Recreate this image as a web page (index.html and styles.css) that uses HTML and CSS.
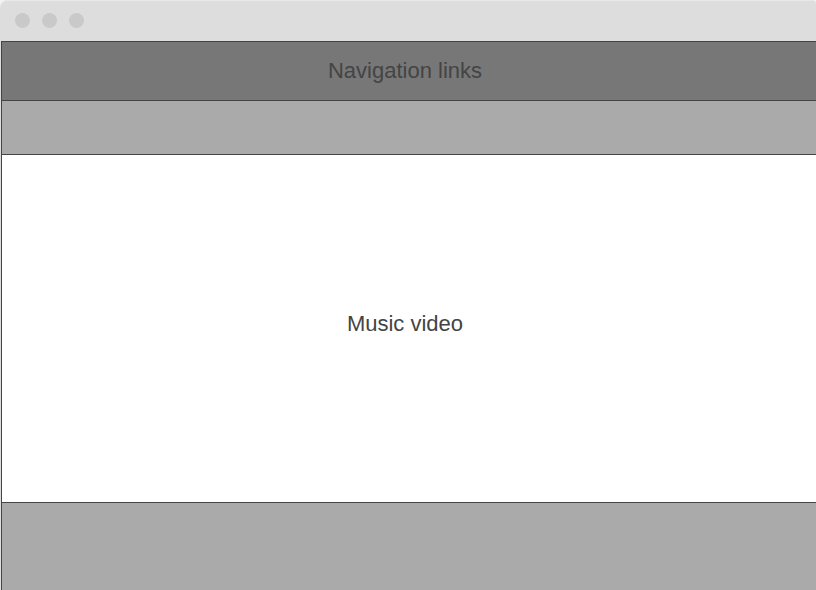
FILE: index.html
```html
<!DOCTYPE html>
<html lang="en">
<head>
<meta charset="utf-8">
<meta name="viewport" content="width=device-width, initial-scale=1">
<title>Music video wireframe</title>
<link rel="stylesheet" href="styles.css">
</head>
<body>
<div class="window">
  <div class="titlebar">
    <span class="dot"></span>
    <span class="dot"></span>
    <span class="dot"></span>
  </div>
  <div class="page">
    <nav class="row nav">Navigation links</nav>
    <div class="row strip"></div>
    <main class="row video">Music video</main>
    <footer class="row footer"></footer>
  </div>
</div>
</body>
</html>
```

FILE: styles.css
```css
* {
  box-sizing: border-box;
}

body {
  margin: 0;
  background: #f4f4f4;
  color: #444;
  font: 22px/26px "Liberation Sans", Arial, sans-serif;
}

.window {
  display: flex;
  flex-direction: column;
  min-height: 100vh;
  background: #ddd;
  border-radius: 8px 4px 0 0;
}

.titlebar {
  display: flex;
  align-items: center;
  gap: 12px;
  padding: 12px 15px 13px;
  border-top: 1px solid #e8e8e8;
  border-radius: 8px 4px 0 0;
}

.dot {
  width: 15px;
  height: 15px;
  border-radius: 50%;
  background: #c9c9c9;
}

.page {
  flex: 1;
  display: flex;
  flex-direction: column;
  margin-left: 1px;
  border-left: 1px solid #444;
}

.row {
  display: flex;
  align-items: center;
  justify-content: center;
  padding: 16px 8px 16px 0;
  border-top: 1px solid #444;
}

.nav {
  background: #777;
}

.strip {
  min-height: 54px;
  background: #aaa;
}

.video {
  flex: 1;
  padding-bottom: 26px;
  background: #fff;
}

.footer {
  min-height: 88px;
  background: #aaa;
}
```
